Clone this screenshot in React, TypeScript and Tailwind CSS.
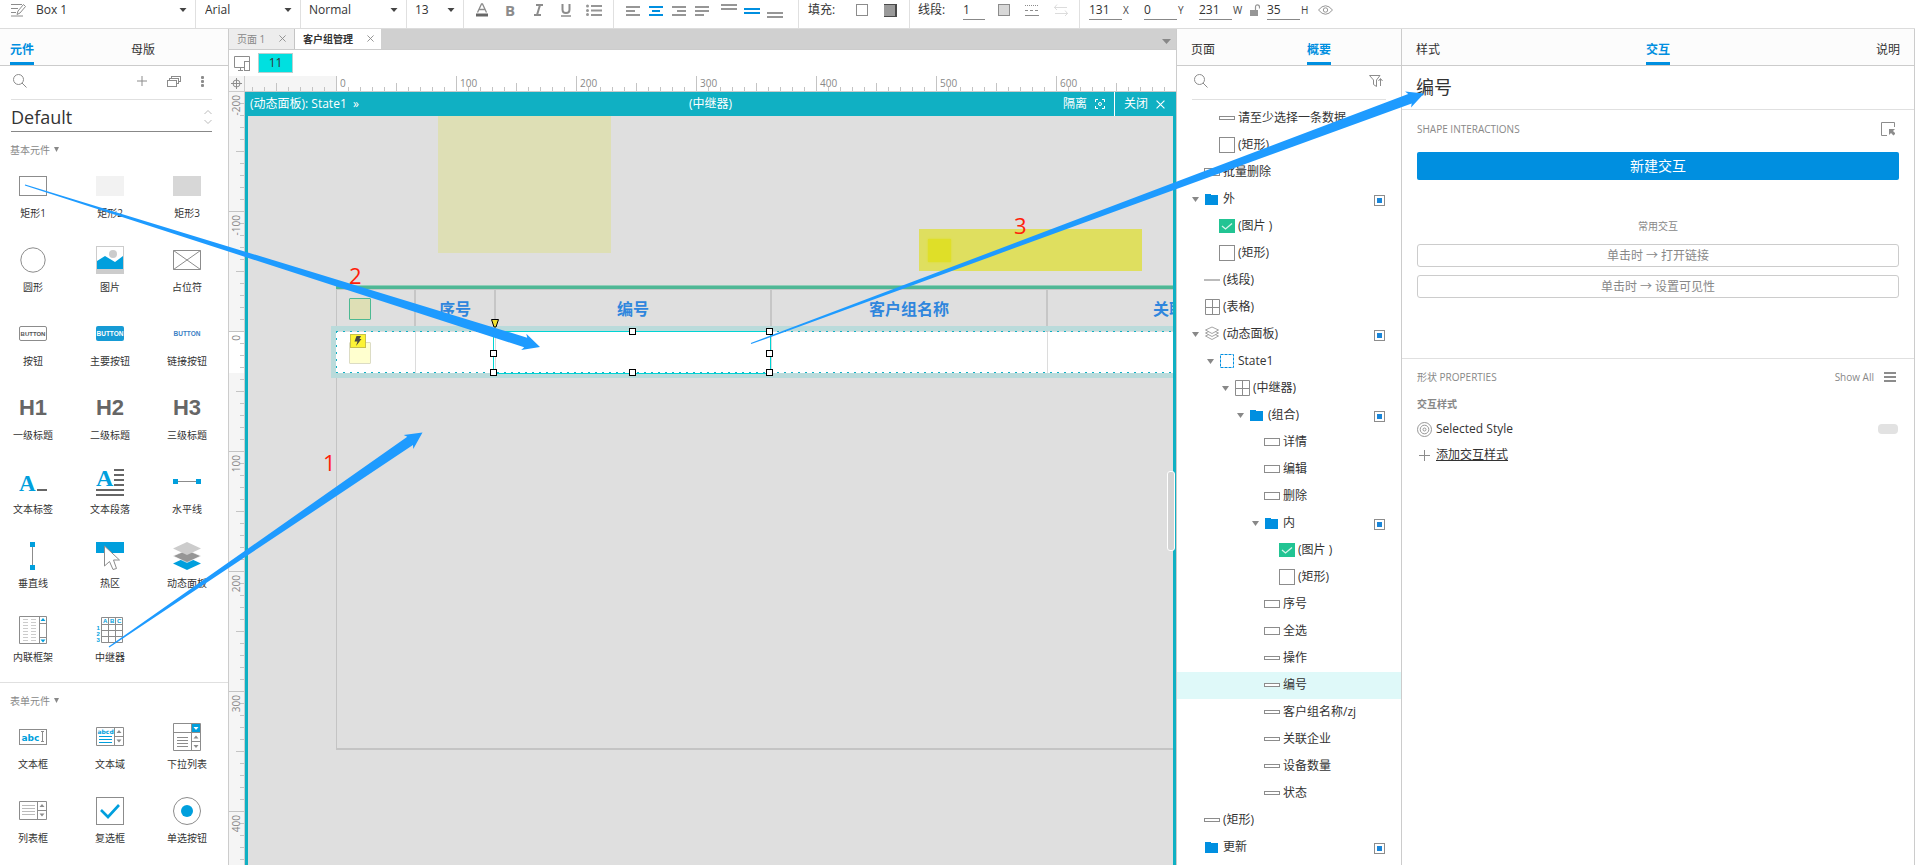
import React from "react";

const GREY = "#969696";
const BLUE = "#008fe0";

/* ---------- toolbar ---------- */

function Caret() {
  return (
    <svg className="pointer-events-none shrink-0" width="8" height="4" viewBox="0 0 8 4">
      <path d="M0.5 0H7.5L4 4Z" fill="#444" />
    </svg>
  );
}

function Picker({ label, value, className }: { label: string; value: string; className: string }) {
  return (
    <div className={"flex h-7 shrink-0 items-center border-r border-[#e0e0e0] pb-2 " + className}>
      <select aria-label={label} className="min-w-0 flex-1 appearance-none bg-transparent text-[12px] leading-5 text-[#333] outline-none">
        <option>{value}</option>
      </select>
      <Caret />
    </div>
  );
}

function ToolButton({ label, children }: { label: string; children: React.ReactNode }) {
  return (
    <button aria-label={label} className="flex h-5 w-7 items-center justify-center text-[15px] leading-5 text-[#8c8c8c]">
      {children}
    </button>
  );
}

function Lines({ rows, color = GREY, w = 14, label }: { rows: number[][]; color?: string; w?: number; label: string }) {
  return (
    <button aria-label={label}>
      <svg width={w} height="20" viewBox={`0 0 ${w} 20`} fill={color}>
        {rows.map(([x, y, width], i) => (
          <rect key={i} x={x} y={y} width={width} height="2" />
        ))}
      </svg>
    </button>
  );
}

function NumberField({ id, value, unit }: { id: string; value: string; unit: string }) {
  return (
    <div className="flex items-center">
      <input
        id={id}
        defaultValue={value}
        className="h-5 w-[33px] border-b border-[#888] bg-transparent text-[12px] leading-5 text-[#333] outline-none"
      />
      <label htmlFor={id} className="w-[22px] pl-px text-[10px] leading-5 text-[#444]">
        {unit}
      </label>
    </div>
  );
}

function Toolbar() {
  return (
    <header className="flex h-[29px] shrink-0 overflow-hidden border-b border-[#dcdcdc] bg-white">
      <div className="flex h-7 w-[196px] shrink-0 items-center border-r border-[#e0e0e0] pb-2 pl-[11px]">
        <svg width="15" height="14" viewBox="0 0 15 14" fill="none" stroke="#8c8c8c">
          <path d="M0 1.5H11M0 5.5H7M0 9.5H5M0 13H12" />
          <path d="M6 11.5L7 8L12.5 1.5L14.5 3.5L9 10Z" />
        </svg>
        <select aria-label="样式" className="ml-[10px] w-[143px] appearance-none bg-transparent text-[12px] leading-5 text-[#333] outline-none">
          <option>Box 1</option>
        </select>
        <Caret />
      </div>
      <Picker label="字体" value="Arial" className="w-[105px] pr-2 pl-[9px]" />
      <Picker label="字重" value="Normal" className="w-[106px] pr-2 pl-2" />
      <Picker label="字号" value="13" className="w-[57px] pr-2 pl-2" />
      <div className="flex h-7 w-[150px] shrink-0 items-center border-r border-[#e0e0e0] pb-2 pl-1">
        <ToolButton label="颜色">
          <svg width="12" height="14" viewBox="0 0 12 14" fill="none" stroke="#8c8c8c">
            <path d="M1.5 9.5L5.5 1H6.5L10.5 9.5M3 6.5H9" strokeWidth="1.3" />
            <path d="M0 12H12" stroke="#666" strokeWidth="3" />
          </svg>
        </ToolButton>
        <ToolButton label="粗体">
          <b>B</b>
        </ToolButton>
        <ToolButton label="斜体">
          <svg width="11" height="12" viewBox="0 0 11 12" fill="none" stroke="#8c8c8c" strokeWidth="2">
            <path d="M3 1H10M1 11H8M7 1L4 11" />
          </svg>
        </ToolButton>
        <ToolButton label="下划线">
          <svg width="10" height="13" viewBox="0 0 10 13" fill="none" stroke="#8c8c8c">
            <path d="M1.5 0V5.5Q1.5 9 5 9T8.5 5.5V0" strokeWidth="2" />
            <path d="M0 12H10" strokeWidth="1.5" />
          </svg>
        </ToolButton>
        <ToolButton label="列表">
          <svg width="16" height="12" viewBox="0 0 16 12" fill="#969696">
            <path d="M5 1H16V3H5ZM5 5.5H16V7.5H5ZM5 10H16V12H5Z" />
            <circle cx="1.5" cy="2" r="1.5" />
            <circle cx="1.5" cy="6.5" r="1.5" />
            <circle cx="1.5" cy="10.5" r="1.5" />
          </svg>
        </ToolButton>
      </div>
      <div className="flex h-7 w-[185px] shrink-0 items-center gap-[9px] border-r border-[#e0e0e0] pb-2 pl-[12px]">
        <Lines label="左对齐" rows={[[0, 6, 14], [0, 10, 9], [0, 14, 14]]} />
        <Lines label="居中" color={BLUE} rows={[[0, 6, 14], [3, 10, 8], [0, 14, 14]]} />
        <Lines label="右对齐" rows={[[0, 6, 14], [5, 10, 9], [0, 14, 14]]} />
        <Lines label="两端对齐" rows={[[0, 6, 14], [0, 10, 14], [0, 14, 9]]} />
        <div className="ml-[3px] flex gap-[7px]">
          <Lines label="顶部" w={16} rows={[[0, 4, 16], [0, 8, 16]]} />
          <Lines label="中部" w={16} color={BLUE} rows={[[0, 8, 16], [0, 12, 16]]} />
          <Lines label="底部" w={16} rows={[[0, 12, 16], [0, 16, 16]]} />
        </div>
      </div>
      <div className="flex h-7 w-[111px] shrink-0 items-center border-r border-[#e0e0e0] pb-2 pl-[9px] text-[12px] text-[#333]">
        <span className="w-12 leading-5">填充:</span>
        <button aria-label="填充颜色" className="h-3 w-3 border border-[#8c8c8c]" />
        <button aria-label="阴影" className="ml-4 h-[13px] w-[13px] bg-[#4a4a4a]">
          <span className="block h-[11px] w-[11px] bg-[#9a9a9a]" />
        </button>
      </div>
      <div className="flex h-7 w-[170px] shrink-0 items-center border-r border-[#e0e0e0] pb-2 pl-[8px] text-[12px] text-[#333]">
        <label htmlFor="line" className="w-[45px] leading-5">
          线段:
        </label>
        <input id="line" defaultValue="1" className="h-5 w-[22px] border-b border-[#888] bg-transparent leading-5 outline-none" />
        <button aria-label="线段颜色" className="ml-[13px] h-3 w-3 border border-[#8c8c8c] bg-[#d8d8d8]" />
        <svg className="ml-[15px]" width="14" height="12" viewBox="0 0 14 12" stroke="#8c8c8c">
          <path d="M0 1.5H14" strokeDasharray="1 1" />
          <path d="M0 6.5H14" strokeDasharray="3 2" />
          <path d="M0 11.5H14" />
        </svg>
        <svg className="ml-[15px]" width="14" height="12" viewBox="0 0 14 12" fill="none" stroke="#dcdcdc">
          <path d="M0 3.5H13M3 0.5L0.5 3.5L3 6M1 9.5H14M11 6.5L13.5 9.5L11 12" />
        </svg>
      </div>
      <div className="flex h-7 shrink-0 items-center pb-2 pl-[9px]">
        <NumberField id="px" value="131" unit="X" />
        <NumberField id="py" value="0" unit="Y" />
        <div className="flex w-[68px] items-center">
          <NumberField id="pw" value="231" unit="W" />
          <svg className="-ml-1 shrink-0" width="10" height="12" viewBox="0 0 10 12" fill="none" stroke="#969696">
            <rect x="0" y="6" width="8" height="6" fill="#969696" stroke="none" />
            <path d="M5.5 6V3Q5.5 0.8 7.5 0.8T9.5 3V4.5" strokeWidth="1.2" />
          </svg>
        </div>
        <NumberField id="ph" value="35" unit="H" />
        <svg className="-ml-1" width="15" height="10" viewBox="0 0 15 10" fill="none" stroke="#969696">
          <path d="M0.5 5Q7.5 -3.5 14.5 5Q7.5 13.5 0.5 5Z" />
          <circle cx="7.5" cy="5" r="2.2" />
        </svg>
      </div>
    </header>
  );
}

/* ---------- shared ---------- */

function SearchIcon() {
  return (
    <svg width="14" height="14" viewBox="0 0 14 14" fill="none" stroke="#8c8c8c">
      <circle cx="5.5" cy="5.5" r="5" />
      <path d="M9 9L13.5 13.5" />
    </svg>
  );
}

function PanelTab({ children, active }: { children: React.ReactNode; active?: boolean }) {
  return (
    <button
      className={
        active
          ? "flex h-9 items-end border-b-3 border-[#008fe0] pt-2 pb-[4px] text-[12px] leading-4 font-bold text-[#008fe0]"
          : "flex h-9 items-end border-b-3 border-transparent pt-2 pb-[4px] text-[12px] leading-4 text-[#333]"
      }
    >
      {children}
    </button>
  );
}

/* ---------- widget library ---------- */

type Widget = { name: string; icon: React.ReactNode };

function Ic({ children }: { children?: React.ReactNode }) {
  return (
    <svg className="shrink-0" width="28" height="28" viewBox="0 0 28 28" fill="none" stroke="#8c8c8c">
      {children}
    </svg>
  );
}

const CY = "#009fdd";
const T = "Liberation Sans, sans-serif";

function Heading({ t }: { t: string }) {
  return <span className="font-[family-name:'Liberation_Sans',sans-serif] text-[22px] leading-7 font-bold text-[#666]">{t}</span>;
}

const basic: Widget[] = [
  { name: "矩形1", icon: <Ic><rect x="0.5" y="4.5" width="27" height="19" /></Ic> },
  { name: "矩形2", icon: <Ic><rect x="0" y="4" width="28" height="20" fill="#f2f2f2" stroke="none" /></Ic> },
  { name: "矩形3", icon: <Ic><rect x="0" y="4" width="28" height="20" fill="#d7d7d7" stroke="none" /></Ic> },
  { name: "圆形", icon: <Ic><circle cx="14" cy="14" r="12.2" /></Ic> },
  {
    name: "图片",
    icon: (
      <Ic>
        <rect x="0.5" y="0.5" width="27" height="27" stroke="#ccc" />
        <circle cx="17" cy="8" r="4" fill="#ccc" stroke="none" />
        <path d="M1 15L9 10L19 16L27 10V23H1Z" fill={CY} stroke="none" />
        <rect x="0" y="23" width="28" height="5" fill="#ccc" stroke="none" />
      </Ic>
    ),
  },
  { name: "占位符", icon: <Ic><path d="M0.5 4.5H27.5V23.5H0.5ZM0.5 4.5L27.5 23.5M27.5 4.5L0.5 23.5" /></Ic> },
  {
    name: "按钮",
    icon: (
      <Ic>
        <rect x="0.5" y="6.5" width="27" height="14" rx="1.5" />
        <text x="14" y="16" textAnchor="middle" fontFamily={T} fontSize="6" fontWeight="bold" fill="#555" stroke="none">BUTTON</text>
      </Ic>
    ),
  },
  {
    name: "主要按钮",
    icon: (
      <Ic>
        <rect x="0" y="6" width="28" height="15" rx="2" fill="#169bd5" stroke="none" />
        <text x="14" y="16" textAnchor="middle" fontFamily={T} fontSize="6.5" fontWeight="bold" fill="#fff" stroke="none">BUTTON</text>
      </Ic>
    ),
  },
  {
    name: "链接按钮",
    icon: (
      <Ic>
        <text x="14" y="16" textAnchor="middle" fontFamily={T} fontSize="6.5" fontWeight="bold" fill="#3a80c4" stroke="none">BUTTON</text>
      </Ic>
    ),
  },
  { name: "一级标题", icon: <Heading t="H1" /> },
  { name: "二级标题", icon: <Heading t="H2" /> },
  { name: "三级标题", icon: <Heading t="H3" /> },
  {
    name: "文本标签",
    icon: (
      <Ic>
        <text x="0" y="23" fontFamily="Liberation Serif, serif" fontSize="23" fontWeight="bold" fill={CY} stroke="none">A</text>
        <path d="M18 22H28" stroke="#666" strokeWidth="2" />
      </Ic>
    ),
  },
  {
    name: "文本段落",
    icon: (
      <Ic>
        <text x="0" y="18" fontFamily="Liberation Serif, serif" fontSize="24" fontWeight="bold" fill={CY} stroke="none">A</text>
        <path d="M18 2H28M18 7H28M18 12H28M18 17H28M0 22H28M0 27H28" stroke="#666" strokeWidth="2" />
      </Ic>
    ),
  },
  {
    name: "水平线",
    icon: (
      <Ic>
        <path d="M3 13.5H25" />
        <path d="M0 11H5V16H0ZM23 11H28V16H23Z" fill={CY} stroke="none" />
      </Ic>
    ),
  },
  {
    name: "垂直线",
    icon: (
      <Ic>
        <path d="M13.5 3V25" />
        <path d="M11 0H16V5H11ZM11 23H16V28H11Z" fill={CY} stroke="none" />
      </Ic>
    ),
  },
  {
    name: "热区",
    icon: (
      <Ic>
        <rect x="0" y="0" width="28" height="11" fill={CY} stroke="none" />
        <path d="M8.5 4L23.5 18H17.5L20.5 26.5L17 27.5L13.5 19.5L8.5 24Z" fill="#fff" />
      </Ic>
    ),
  },
  {
    name: "动态面板",
    icon: (
      <Ic>
        <g stroke="none">
          <path d="M14 15L28 21.5L14 28L0 21.5Z" fill={CY} />
          <path d="M14 8L28 14L14 20.5L0 14Z" fill="#969696" stroke="#fff" strokeWidth="0.6" />
          <path d="M14 0L28 6.5L14 13L0 6.5Z" fill="#ccc" />
        </g>
      </Ic>
    ),
  },
  {
    name: "内联框架",
    icon: (
      <Ic>
        <path d="M0.5 0.5H27.5V27.5H0.5ZM20.5 0V28M20.5 7.5H27.5M20.5 21.5H27.5" />
        <path d="M4 3.5H9M4 6.5H9M4 9.5H9M4 12.5H9M4 15.5H9M4 18.5H9M4 21.5H9M4 24.5H9M12 3.5H17M12 6.5H17M12 9.5H17M12 12.5H17M12 15.5H17M12 18.5H17M12 21.5H17M12 24.5H17" stroke="#ccc" />
        <path d="M21.5 5L24 2L26.5 5ZM21.5 23.5L24 26.5L26.5 23.5Z" fill={CY} stroke="none" />
      </Ic>
    ),
  },
  {
    name: "中继器",
    icon: (
      <Ic>
        <path d="M5.5 1.5H26.5V26.5H5.5ZM12.5 1V27M19.5 1V27M5 8.5H27M5 14.5H27M5 20.5H27" />
        <g fill={CY} stroke="none" fontFamily={T} fontSize="6" fontWeight="bold">
          <text x="7" y="7">A</text>
          <text x="14" y="7">B</text>
          <text x="21" y="7">C</text>
          <text x="0.5" y="14">1</text>
          <text x="0.5" y="20">2</text>
          <text x="0.5" y="26">3</text>
        </g>
      </Ic>
    ),
  },
];

const forms: Widget[] = [
  {
    name: "文本框",
    icon: (
      <Ic>
        <rect x="0.5" y="6.5" width="27" height="15" />
        <text x="2.5" y="18" fontFamily="DejaVu Sans, sans-serif" fontSize="9" fontWeight="bold" fill={CY} stroke="none">abc</text>
        <path d="M22 8.5H25M22 18.5H25M23.5 8.5V18.5" />
      </Ic>
    ),
  },
  {
    name: "文本域",
    icon: (
      <Ic>
        <path d="M0.5 4.5H27.5V22.5H0.5ZM18.5 4V23M18.5 13.5H27.5" />
        <text x="1.5" y="11" fontFamily="DejaVu Sans, sans-serif" fontSize="6" fontWeight="bold" fill={CY} stroke="none">abcd</text>
        <path d="M3 13.5H16M3 16.5H16M3 19.5H16" stroke={CY} />
        <path d="M20.5 10L23 7L25.5 10ZM20.5 16.5L23 19.5L25.5 16.5Z" fill="#8c8c8c" stroke="none" />
      </Ic>
    ),
  },
  {
    name: "下拉列表",
    icon: (
      <Ic>
        <path d="M0.5 0.5H27.5V27.5H0.5ZM0.5 9.5H27.5M18.5 0V28M18.5 18.5H27.5" />
        <rect x="19" y="1" width="8" height="8" fill={CY} stroke="none" />
        <path d="M20.5 4H25.5L23 7Z" fill="#fff" stroke="none" />
        <path d="M4 14.5H15M4 17.5H15M4 20.5H15M4 23.5H15" />
        <path d="M20.5 15.5L23 12.5L25.5 15.5ZM20.5 22L23 25L25.5 22Z" fill="#8c8c8c" stroke="none" />
      </Ic>
    ),
  },
  {
    name: "列表框",
    icon: (
      <Ic>
        <path d="M0.5 4.5H27.5V22.5H0.5ZM18.5 4V23M18.5 13.5H27.5" />
        <path d="M3 8.5H16M3 11.5H16M3 14.5H16M3 17.5H16" stroke="#bbb" />
        <path d="M20.5 10L23 7L25.5 10ZM20.5 16.5L23 19.5L25.5 16.5Z" fill="#8c8c8c" stroke="none" />
      </Ic>
    ),
  },
  {
    name: "复选框",
    icon: (
      <Ic>
        <rect x="0.5" y="0.5" width="27" height="27" />
        <path d="M5 13L12 20L23 8" stroke={CY} strokeWidth="2.6" />
      </Ic>
    ),
  },
  {
    name: "单选按钮",
    icon: (
      <Ic>
        <circle cx="14" cy="14" r="13.5" />
        <circle cx="14" cy="14" r="6" fill={CY} stroke="none" />
      </Ic>
    ),
  },
];

function WidgetGrid({ title, items }: { title: string; items: Widget[] }) {
  return (
    <section>
      <h2 className="flex items-center gap-1 pt-[10px] pl-[10px] text-[10px] leading-4 text-[#888]">
        {title}
        <svg className="mb-[2px]" width="5" height="5" viewBox="0 0 5 5">
          <path d="M0 0H5L2.5 5Z" fill="#888" />
        </svg>
      </h2>
      <ul className="grid grid-cols-[60px_60px_60px] gap-x-[17px] gap-y-[22px] pt-[14px] pl-[3px]">
        {items.map((w) => (
          <li key={w.name} className="flex h-[52px] flex-col items-center gap-[3px]">
            {w.icon}
            <span className="text-[10px] leading-5 whitespace-nowrap text-[#333]">{w.name}</span>
          </li>
        ))}
      </ul>
    </section>
  );
}

function Library() {
  return (
    <aside className="w-[229px] shrink-0 overflow-hidden border-r border-[#ccc] bg-white">
      <nav className="flex h-[37px] border-b border-[#ccc] bg-[#fcfcfc] pl-[10px]">
        <div className="w-[121px]">
          <PanelTab active>元件</PanelTab>
        </div>
        <PanelTab>母版</PanelTab>
      </nav>
      <div className="mr-[16px] ml-[11px] flex h-[34px] items-center border-b border-[#e0e0e0] pr-[7px] pb-[3px] pl-[2px]">
        <SearchIcon />
        <div className="ml-auto flex items-center gap-5">
          <svg width="10" height="10" viewBox="0 0 10 10" stroke="#8c8c8c">
            <path d="M5 0V10M0 5H10" />
          </svg>
          <svg width="14" height="11" viewBox="0 0 14 11" fill="#fff" stroke="#8c8c8c">
            <rect x="4.5" y="0.5" width="9" height="5" />
            <rect x="2.5" y="2.5" width="9" height="5" />
            <rect x="0.5" y="4.5" width="9" height="6" />
          </svg>
          <svg width="4" height="11" viewBox="0 0 4 11" fill="#8c8c8c">
            <rect x="0" y="0" width="3" height="3" rx="1" />
            <rect x="0" y="4" width="3" height="3" rx="1" />
            <rect x="0" y="8" width="3" height="3" rx="1" />
          </svg>
        </div>
      </div>
      <div className="mr-[16px] ml-[11px] flex h-8 items-center border-b border-[#888] pt-[3px]">
        <select aria-label="元件库" className="flex-1 appearance-none bg-transparent text-[18px] leading-7 text-[#333] outline-none">
          <option>Default</option>
        </select>
        <svg width="8" height="14" viewBox="0 0 8 14" fill="none" stroke="#bbb">
          <path d="M0.5 4L4 0.5L7.5 4M0.5 10L4 13.5L7.5 10" />
        </svg>
      </div>
      <WidgetGrid title="基本元件" items={basic} />
      <div className="mt-[14px] border-t border-[#e0e0e0]">
        <WidgetGrid title="表单元件" items={forms} />
      </div>
    </aside>
  );
}

/* ---------- rulers and canvas ---------- */

const H_TICKS = Array.from({ length: 170 }, (_, i) => i - 7);
const V_TICKS = Array.from({ length: 120 }, (_, i) => i - 20);

function RulerTop() {
  return (
    <svg className="h-4 min-w-0 flex-1 border-b border-[#ccc]" fill="#888" stroke="#c4c4c4">
      <rect x="0" y="0" width="91" height="16" fill="#f5f5f5" stroke="none" />
      {H_TICKS.map((k) => {
        const x = 91.5 + k * 12;
        return <path key={k} d={`M${x} ${k % 10 === 0 ? 0 : k % 5 === 0 ? 7 : 11}V15`} />;
      })}
      {[0, 1, 2, 3, 4, 5, 6].map((n) => (
        <text key={n} x={95 + n * 120} y="11" fontSize="10" stroke="none">
          {n * 100}
        </text>
      ))}
    </svg>
  );
}

function RulerSide() {
  return (
    <svg className="h-full w-4 shrink-0 border-r border-[#ccc]" fill="#888" stroke="#c4c4c4">
      <rect x="0" y="0" width="15" height="3000" fill="#f5f5f5" stroke="none" />
      <rect x="0" y="239" width="15" height="42" fill="#fff" stroke="none" />
      {V_TICKS.map((k) => {
        const y = 239.5 + k * 12;
        return <path key={k} d={`M${k % 10 === 0 ? 0 : k % 5 === 0 ? 7 : 11} ${y}H15`} />;
      })}
      {[-2, -1, 0, 1, 2, 3, 4].map((n) => (
        <text key={n} transform={`translate(11 ${243 + n * 120}) rotate(-90)`} textAnchor="end" fontSize="10" stroke="none">
          {n * 100}
        </text>
      ))}
    </svg>
  );
}

function Handle({ className }: { className: string }) {
  return <span className={"absolute h-[7px] w-[7px] border border-black bg-white " + className} />;
}

function Th({ children }: { children?: React.ReactNode }) {
  return (
    <th className="h-[42px] border-r-2 border-[#c6c6c6] pb-[3px] align-middle text-[16px] leading-5 font-bold text-[#2f86dd]">
      {children}
    </th>
  );
}

function Canvas() {
  return (
    <div className="relative flex min-h-0 flex-1">
      <div className="relative min-w-0 flex-1 overflow-hidden border-x-3 border-[#10b0c3] bg-[#dfdfdf]">
        <div className="absolute top-0 left-[190px] h-[137px] w-[173px] bg-[#dedfb5]" />
        <div className="absolute top-[113px] left-[671px] h-[42px] w-[223px] bg-[#dfdf5f]" />
        <div className="absolute top-[123px] left-[680px] h-[23px] w-[23px] bg-[#dfdf28] shadow-[0_0_2px_#dfdf28]" />

        <div className="absolute top-[169px] right-0 left-[88px] h-[465px] border-b-2 border-l border-[#c4c4c4]" />
        <div className="absolute top-[169px] right-0 left-[88px] h-1 border-t border-[#8fceb8] bg-[#4fb795]" />

        <table className="absolute top-[173px] left-[88px] w-[1183px] table-fixed border-collapse">
          <colgroup>
            <col className="w-[79px]" />
            <col className="w-[80px]" />
            <col className="w-[276px]" />
            <col className="w-[276px]" />
            <col className="w-[276px]" />
            <col />
          </colgroup>
          <thead>
            <tr className="border-t border-[#c6c6c6]">
              <Th>
                <input
                  type="checkbox"
                  aria-label="全选"
                  className="ml-[13px] block h-[22px] w-[22px] appearance-none rounded-[1px] border border-[#4db992] bg-[#dedfb5]"
                />
              </Th>
              <Th>序号</Th>
              <Th>编号</Th>
              <Th>客户组名称</Th>
              <Th>关联企业</Th>
              <Th />
            </tr>
          </thead>
          <tbody>
            <tr className="bg-white">
              <td className="h-[42px] border-r border-[#dcdcdc]" />
              <td className="h-[42px] border-r border-[#dcdcdc]" />
              <td className="h-[42px] border-r border-[#dcdcdc]" />
              <td className="h-[42px] border-r border-[#dcdcdc]" />
              <td className="h-[42px] border-r border-[#dcdcdc]" />
              <td />
            </tr>
          </tbody>
        </table>

        <div className="absolute top-[210px] -right-2 left-[83px] h-[52px] border-5 border-[#badbdb]" />
        <svg className="absolute top-[215px] left-[88px] h-[42px] w-full" fill="none" stroke="#10b0c3">
          <path d="M0 0.5H2000M0 41.5H2000M0.5 0V42" strokeDasharray="2 5" />
        </svg>

        <div className="absolute top-[226px] left-[101px] h-[22px] w-[22px] rounded-[1px] border border-[#dcdcc4] bg-[#ffffcf]" />
        <svg className="absolute top-[218px] left-[102px]" width="16" height="14" viewBox="0 0 16 14">
          <rect x="0.5" y="0.5" width="15" height="13" fill="#fdf335" stroke="#c8c04c" />
          <path d="M6.5 2H11L9.5 5H11.5L6 12L7.5 7.5H4.5Z" fill="#444" />
        </svg>

        <div className="absolute top-[215px] left-[245px] h-[43px] w-[278px] border border-[#00d4d4]">
          <Handle className="-top-1 left-[135px]" />
          <Handle className="-top-1 -right-[3px]" />
          <Handle className="top-[18px] -left-1" />
          <Handle className="top-[18px] -right-[3px]" />
          <Handle className="-bottom-[3px] -left-1" />
          <Handle className="-bottom-[3px] left-[135px]" />
          <Handle className="-right-[3px] -bottom-[3px]" />
        </div>
        <svg className="absolute top-[203px] left-[243px]" width="8" height="9" viewBox="0 0 8 9">
          <path d="M0.5 0.5H7.5L5 8H3Z" fill="#f0e030" stroke="#000" />
        </svg>
      </div>
      <div className="absolute top-[355px] right-px h-20 w-2 rounded-[3px] border border-white bg-[#d4d4d4]" />
    </div>
  );
}

function Cross({ size = 7, color = "#888" }: { size?: number; color?: string }) {
  return (
    <svg width={size} height={size} viewBox="0 0 8 8" stroke={color}>
      <path d="M0.5 0.5L7.5 7.5M7.5 0.5L0.5 7.5" />
    </svg>
  );
}

function Workspace() {
  return (
    <main className="flex min-w-0 flex-1 flex-col bg-white">
      <div className="flex h-[21px] border-b border-[#ccc] bg-[#d0d0d0] text-[10px] leading-4">
        <button className="flex w-[66px] items-center justify-between border-r border-[#c4c4c4] bg-[#ededed] px-2 pb-px text-[#888]">
          页面 1
          <Cross />
        </button>
        <button className="flex w-[86px] items-center justify-between bg-white pr-[7px] pb-px pl-2 font-bold text-[#333]">
          客户组管理
          <Cross />
        </button>
        <svg className="mt-[10px] mr-[5px] ml-auto" width="9" height="5" viewBox="0 0 9 5"><path d="M0 0H9L4.5 5Z" fill="#888" /></svg>
      </div>
      <div className="flex h-[26px] items-center pl-[5px]">
        <svg width="16" height="15" viewBox="0 0 16 15" fill="none" stroke="#8c8c8c">
          <path d="M10 11.5H0.5V0.5H15.5V5M4 14.5H9M6.5 11.5V14" />
          <rect x="10.5" y="5.5" width="5" height="9" />
        </svg>
        <button className="ml-2 h-5 w-[35px] border border-[#b8d0d0] bg-[#00e0e0] text-[12px] leading-4 text-[#333]">11</button>
      </div>
      <div className="flex h-4">
        <div className="flex w-4 items-center justify-center border-r border-b border-[#ccc] bg-[#f5f5f5]">
          <svg width="11" height="11" viewBox="0 0 11 11" fill="none" stroke="#8c8c8c">
            <circle cx="5.5" cy="5.5" r="3.5" />
            <path d="M5.5 0V11M0 5.5H11" />
          </svg>
        </div>
        <RulerTop />
      </div>
      <div className="flex min-h-0 flex-1">
        <RulerSide />
        <div className="flex min-w-0 flex-1 flex-col">
          <div className="grid h-6 shrink-0 grid-cols-[1fr_auto_1fr] items-center bg-[#10b0c3] text-[12px] leading-6 text-white">
            <span className="pl-[5px]">(动态面板): State1&nbsp; »</span>
            <span>(中继器)</span>
            <div className="flex justify-end">
              <button className="flex h-6 items-center gap-2 border-r border-white pr-[9px]">
                隔离
                <svg width="10" height="10" viewBox="0 0 10 10" fill="none" stroke="#fff">
                  <path d="M0.5 3V0.5H3M7 0.5H9.5V3M9.5 7V9.5H7M3 9.5H0.5V7" />
                  <circle cx="5" cy="5" r="1.5" />
                </svg>
              </button>
              <button className="flex h-6 items-center gap-2 pr-[11px] pl-[9px]">
                关闭
                <Cross size={9} color="#fff" />
              </button>
            </div>
          </div>
          <Canvas />
        </div>
      </div>
    </main>
  );
}

/* ---------- outline ---------- */

type Kind = "thin" | "box" | "square" | "folder" | "image" | "line" | "grid" | "layers" | "state";
type Node = { t: string; k: Kind; d: number; open?: boolean; mark?: boolean; sel?: boolean };

const tree: Node[] = [
  { t: "请至少选择一条数据", k: "thin", d: 1 },
  { t: "(矩形)", k: "square", d: 1 },
  { t: "批量删除", k: "box", d: 0 },
  { t: "外", k: "folder", d: 0, open: true, mark: true },
  { t: "(图片 )", k: "image", d: 1 },
  { t: "(矩形)", k: "square", d: 1 },
  { t: "(线段)", k: "line", d: 0 },
  { t: "(表格)", k: "grid", d: 0 },
  { t: "(动态面板)", k: "layers", d: 0, open: true, mark: true },
  { t: "State1", k: "state", d: 1, open: true },
  { t: "(中继器)", k: "grid", d: 2, open: true },
  { t: "(组合)", k: "folder", d: 3, open: true, mark: true },
  { t: "详情", k: "box", d: 4 },
  { t: "编辑", k: "box", d: 4 },
  { t: "删除", k: "box", d: 4 },
  { t: "内", k: "folder", d: 4, open: true, mark: true },
  { t: "(图片 )", k: "image", d: 5 },
  { t: "(矩形)", k: "square", d: 5 },
  { t: "序号", k: "box", d: 4 },
  { t: "全选", k: "box", d: 4 },
  { t: "操作", k: "thin", d: 4 },
  { t: "编号", k: "thin", d: 4, sel: true },
  { t: "客户组名称/zj", k: "thin", d: 4 },
  { t: "关联企业", k: "thin", d: 4 },
  { t: "设备数量", k: "thin", d: 4 },
  { t: "状态", k: "thin", d: 4 },
  { t: "(矩形)", k: "thin", d: 0 },
  { t: "更新", k: "folder", d: 0, mark: true },
];

const INDENT = ["pl-[15px]", "pl-[30px]", "pl-[45px]", "pl-[60px]", "pl-[75px]", "pl-[90px]"];

const shapes: Record<Kind, React.ReactNode> = {
  thin: <rect x="0.5" y="6.5" width="15" height="3" fill="#fff" />,
  box: <rect x="0.5" y="4.5" width="15" height="7" fill="#fff" />,
  square: <rect x="0.5" y="0.5" width="15" height="15" fill="#fff" />,
  folder: <path d="M1 3H7V4H14V14H1Z" fill={BLUE} stroke="none" />,
  image: (
    <>
      <rect x="0" y="1" width="16" height="14" fill="#22c493" stroke="none" />
      <path d="M3 8L6.5 11L13 5.5" stroke="#d8f5ea" strokeWidth="1.3" />
    </>
  ),
  line: <path d="M0 8H16" stroke="#bbb" strokeWidth="2" />,
  grid: <path d="M1.5 0.5H15.5V15.5H1.5ZM8.5 0V16M1 8.5H16" />,
  layers: (
    <g fill="#fff" strokeWidth="0.8">
      <path d="M8 7L14.5 10L8 13.5L1.5 10Z" />
      <path d="M8 4L14.5 7L8 10.5L1.5 7Z" />
      <path d="M8 1L14.5 4L8 7.5L1.5 4Z" />
    </g>
  ),
  state: <rect x="1.5" y="1.5" width="13" height="13" stroke={BLUE} strokeDasharray="3 1" />,
};

function Outline() {
  return (
    <aside className="flex w-[226px] shrink-0 flex-col overflow-hidden border-x border-[#ccc] bg-white">
      <nav className="flex h-[37px] shrink-0 border-b border-[#ccc] bg-[#fcfcfc] pl-[14px]">
        <div className="w-[116px]">
          <PanelTab>页面</PanelTab>
        </div>
        <PanelTab active>概要</PanelTab>
      </nav>
      <div className="mx-[15px] flex h-[34px] shrink-0 items-center justify-between border-b border-[#e0e0e0] pr-[3px] pb-[3px] pl-[2px]">
        <SearchIcon />
        <svg width="14" height="12" viewBox="0 0 14 12" fill="none" stroke="#8c8c8c">
          <path d="M0.5 0.5H11L7.5 5V11.5L4.5 9.5V5ZM11.5 11V4M9.5 6L11.5 3.5L13.5 6" />
        </svg>
      </div>
      <ul className="pt-[5px]">
        {tree.map((n, i) => (
          <li key={i} className={"flex h-[27px] items-center pr-[16px] pb-px text-[12px] leading-5 text-[#333] " + INDENT[n.d] + (n.sel ? " bg-[#dff9f9]" : "")}>
            <span className="flex w-3 shrink-0">
              {n.open && (
                <svg width="7" height="5" viewBox="0 0 7 5"><path d="M0 0H7L3.5 5Z" fill="#888" /></svg>
              )}
            </span>
            <svg className="mr-[3px] shrink-0" width="16" height="16" viewBox="0 0 16 16" fill="none" stroke="#8c8c8c">
              {shapes[n.k]}
            </svg>
            <span className="whitespace-nowrap">{n.t}</span>
            {n.mark && (
              <span className="mt-[3px] ml-auto flex h-[11px] w-[11px] items-center justify-center border border-[#8c8c8c]">
                <span className="h-[5px] w-[5px] bg-[#1a86d9]" />
              </span>
            )}
          </li>
        ))}
      </ul>
    </aside>
  );
}

/* ---------- inspector ---------- */

function Inspector() {
  return (
    <aside className="w-[513px] shrink-0 overflow-hidden border-r border-[#ccc] bg-white">
      <nav className="flex h-[37px] justify-between border-b border-[#ccc] bg-[#fcfcfc] px-[14px]">
        <PanelTab>样式</PanelTab>
        <PanelTab active>交互</PanelTab>
        <PanelTab>说明</PanelTab>
      </nav>
      <h1 className="h-11 border-b border-[#e0e0e0] pl-[14px] text-[18px] leading-[42px] text-[#333]">编号</h1>
      <section className="h-[249px] border-b border-[#e0e0e0] px-[15px] pt-[9px]">
        <div className="flex h-5 items-center justify-between pr-1 text-[10px] leading-5 text-[#888]">
          SHAPE INTERACTIONS
          <svg width="14" height="14" viewBox="0 0 14 14" fill="none" stroke="#8c8c8c">
            <path d="M6 13.5H0.5V0.5H13.5V5" />
            <path d="M8 7H14L12 9L14.5 11.5L12.5 13.5L10 11L8 13Z" fill="#8c8c8c" stroke="none" />
          </svg>
        </div>
        <button className="mt-[13px] block h-7 w-full rounded-[2px] bg-[#008fe0] text-[14px] leading-7 text-white">新建交互</button>
        <h2 className="mt-9 text-center text-[10px] leading-5 text-[#888]">常用交互</h2>
        <button className="mt-2 block h-[23px] w-full rounded-[3px] border border-[#ccc] text-[12px] leading-5 text-[#888]">单击时 → 打开链接</button>
        <button className="mt-2 block h-[23px] w-full rounded-[3px] border border-[#ccc] text-[12px] leading-5 text-[#888]">单击时 → 设置可见性</button>
      </section>
      <section className="px-[15px] pt-2">
        <div className="flex h-5 items-center text-[10px] leading-5 text-[#888]">
          形状 PROPERTIES
          <button className="mr-[10px] ml-auto">Show All</button>
          <svg className="mr-[3px]" width="12" height="10" viewBox="0 0 12 10" fill="#8c8c8c">
            <path d="M0 0H12V2H0ZM0 4H12V6H0ZM0 8H12V10H0Z" />
          </svg>
        </div>
        <h2 className="mt-[7px] text-[10px] leading-5 font-bold text-[#888]">交互样式</h2>
        <div className="mt-[5px] flex h-5 items-center text-[12px] leading-5 text-[#333]">
          <svg className="mr-1" width="15" height="15" viewBox="0 0 15 15" fill="none" stroke="#8c8c8c" strokeWidth="0.9">
            <circle cx="7.5" cy="7.5" r="7" />
            <circle cx="7.5" cy="7.5" r="4.3" />
            <circle cx="7.5" cy="7.5" r="1.5" />
          </svg>
          Selected Style
          <button aria-label="Selected Style" className="mr-px ml-auto h-[10px] w-5 rounded-[4px] bg-[#e2e2e2]" />
        </div>
        <div className="mt-[6px] flex h-5 items-center pl-[2px] text-[12px] leading-5 text-[#333]">
          <svg className="mr-[6px]" width="11" height="11" viewBox="0 0 11 11" stroke="#8c8c8c"><path d="M5.5 0V11M0 5.5H11" /></svg>
          <a href="#add" className="underline">添加交互样式</a>
        </div>
      </section>
    </aside>
  );
}

/* ---------- annotations drawn over the editor ---------- */

function arrow(x0: number, y0: number, x1: number, y1: number) {
  const len = Math.hypot(x1 - x0, y1 - y0);
  const ux = (x1 - x0) / len;
  const uy = (y1 - y0) / len;
  const at = (back: number, side: number) => `${x1 - ux * back - uy * side},${y1 - uy * back + ux * side}`;
  return [at(len, -0.6), at(15, -5), at(17, -8.5), at(0, 0), at(17, 8.5), at(15, 5), at(len, 0.6)].join(" ");
}

function Annotations() {
  return (
    <svg className="pointer-events-none absolute inset-0 h-full w-full" fill="#1e9bff">
      <polygon points={arrow(109, 647, 422.5, 432.5)} />
      <polygon points={arrow(25, 185, 540, 347)} />
      <polygon points={arrow(751, 343.5, 1424, 93.5)} />
      <g fill="#ff1e0a" fontSize="22">
        <text x="323" y="471">1</text>
        <text x="349" y="284">2</text>
        <text x="1014" y="234">3</text>
      </g>
    </svg>
  );
}

export default function App() {
  return (
    <div className="relative flex h-screen flex-col overflow-hidden bg-white font-[family-name:'Open_Sans','Noto_Sans_CJK_SC',sans-serif]">
      <Toolbar />
      <div className="flex min-h-0 flex-1">
        <Library />
        <Workspace />
        <Outline />
        <Inspector />
      </div>
      <Annotations />
    </div>
  );
}
